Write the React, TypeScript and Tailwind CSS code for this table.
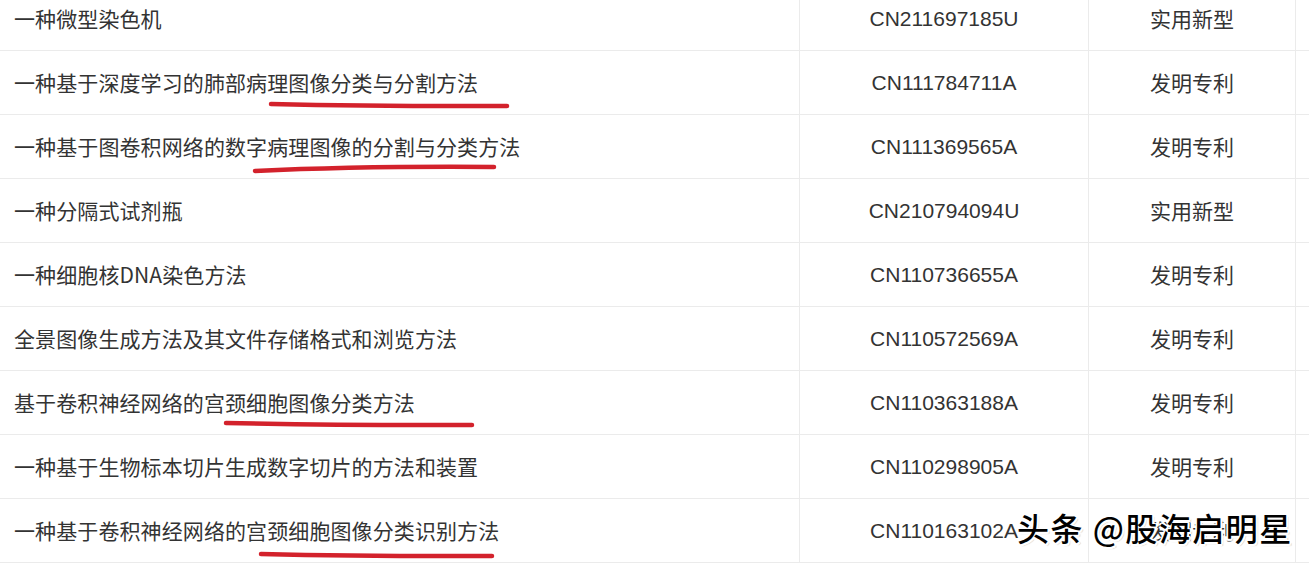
import React from 'react';

type Row = {
  title: string;
  code: string;
  kind: string;
  mark?: { left: number; width: number; top: number; curve: number };
};

const rows: Row[] = [
  { title: '一种微型染色机', code: 'CN211697185U', kind: '实用新型' },
  { title: '一种基于深度学习的肺部病理图像分类与分割方法', code: 'CN111784711A', kind: '发明专利', mark: { left: 268, width: 242, top: 49, curve: -1 } },
  { title: '一种基于图卷积网络的数字病理图像的分割与分类方法', code: 'CN111369565A', kind: '发明专利', mark: { left: 252, width: 245, top: 49, curve: 2 } },
  { title: '一种分隔式试剂瓶', code: 'CN210794094U', kind: '实用新型' },
  { title: '一种细胞核DNA染色方法', code: 'CN110736655A', kind: '发明专利' },
  { title: '全景图像生成方法及其文件存储格式和浏览方法', code: 'CN110572569A', kind: '发明专利' },
  { title: '基于卷积神经网络的宫颈细胞图像分类方法', code: 'CN110363188A', kind: '发明专利', mark: { left: 223, width: 252, top: 48, curve: -1 } },
  { title: '一种基于生物标本切片生成数字切片的方法和装置', code: 'CN110298905A', kind: '发明专利' },
  { title: '一种基于卷积神经网络的宫颈细胞图像分类识别方法', code: 'CN110163102A', kind: '发明专利', mark: { left: 258, width: 237, top: 51, curve: -1 } },
];

const Stroke = ({ mark }: { mark: NonNullable<Row['mark']> }) => {
  const w = mark.width;
  return (
    <svg
      className="absolute pointer-events-none"
      style={{ left: mark.left, top: mark.top, width: w, height: 10 }}
      viewBox={`0 0 ${w} 10`}
    >
      <path
        d={`M3 ${5 + mark.curve} Q ${w * 0.45} ${5 - mark.curve * 1.5} ${w - 3} ${5 - mark.curve}`}
        stroke="#d3222c"
        strokeWidth="4.5"
        strokeLinecap="round"
        fill="none"
      />
    </svg>
  );
};

export default function App() {
  return (
    <div
      className="relative w-[1309px] h-[568px] overflow-hidden bg-white text-[#333]"
      style={{ fontFamily: '"Noto Sans CJK SC", "Noto Sans", sans-serif' }}
    >
      <div className="-mt-[13px]">
        {rows.map((r) => (
          <div key={r.code} className="relative flex h-16 border-b border-[#ebebeb]">
            <div className="flex w-[800px] items-center border-r border-[#ebebeb] pl-[14px] text-[21px] tracking-[0.1px]">
              {r.title}
            </div>
            <div
              className="flex w-[289px] items-center justify-center border-r border-[#ebebeb] text-[21px]"
              style={{ fontFamily: '"Liberation Sans", Arial, sans-serif' }}
            >
              {r.code}
            </div>
            <div className="flex w-[207px] items-center justify-center border-r border-[#ebebeb] text-[21px]">
              {r.kind}
            </div>
            <div className="flex-1" />
            {r.mark && <Stroke mark={r.mark} />}
          </div>
        ))}
      </div>

      {/* watermark */}
      <div
        className="absolute left-[1017px] top-[511px] whitespace-nowrap text-[32px] font-medium leading-none tracking-[1.5px] text-black"
        style={{
          textShadow:
            '1.5px 1.5px 0 #fff, -1.5px -1.5px 0 #fff, 1.5px -1.5px 0 #fff, -1.5px 1.5px 0 #fff, 0 2px 0 #fff, 2px 0 0 #fff, 2px 2px 1px rgba(0,0,0,0.25)',
        }}
      >
        头条 @股海启明星
      </div>
    </div>
  );
}
